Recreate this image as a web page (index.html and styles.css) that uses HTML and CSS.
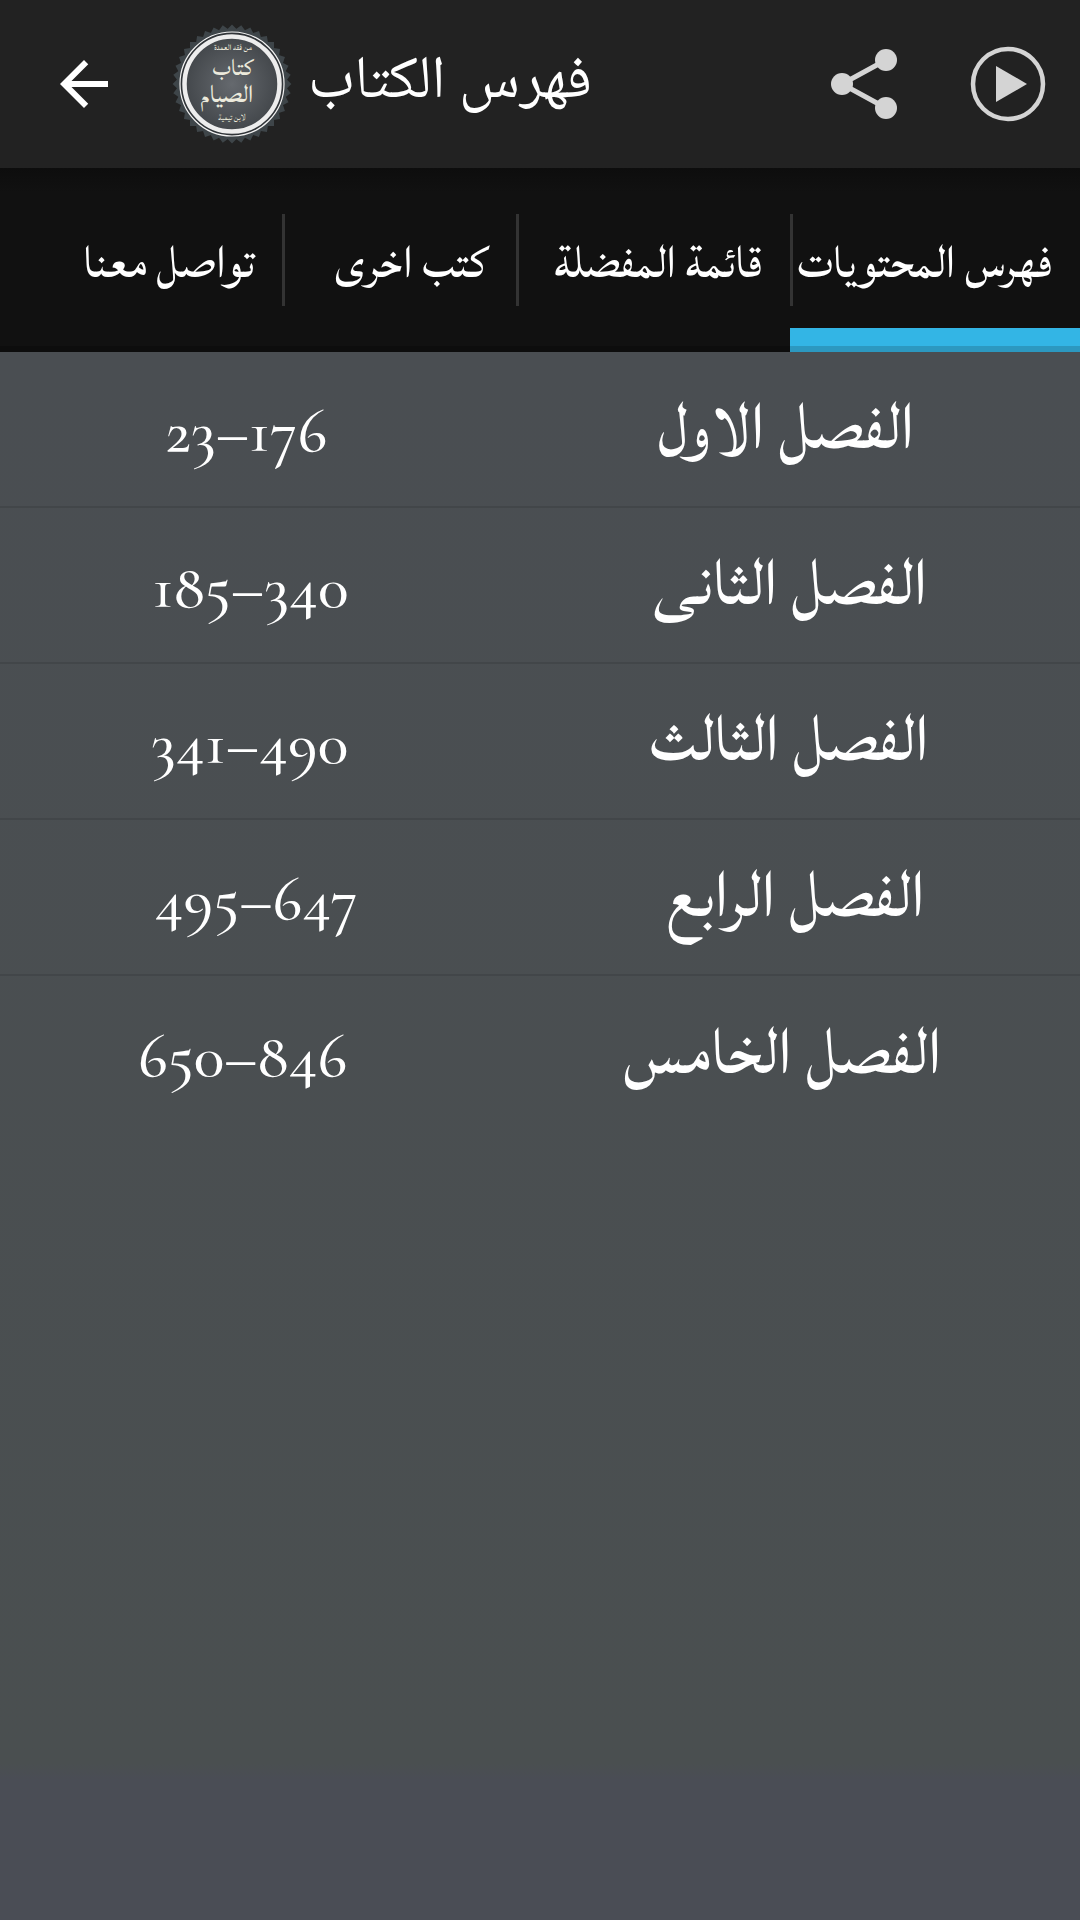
FILE: index.html
```html
<!DOCTYPE html>
<html lang="ar" dir="rtl">
<head>
<meta charset="utf-8">
<meta name="viewport" content="width=device-width, initial-scale=1">
<title>فهرس الكتاب</title>
<link rel="stylesheet" href="styles.css">
</head>
<body>
<header class="app-bar" dir="ltr">
  <button class="icon-button" type="button" aria-label="رجوع">
    <svg class="icon" width="72" height="72" viewBox="0 0 24 24" fill="#fff"><path d="M20 11H7.83l5.59-5.59L12 4l-8 8 8 8 1.41-1.41L7.83 13H20z"/></svg>
  </button>
  <svg class="logo" width="120" height="120" viewBox="-60 -60 120 120" role="img" aria-label="كتاب الصيام">
    <defs>
      <radialGradient id="seal"><stop offset="0" stop-color="#65696e"/><stop offset="1" stop-color="#43474b"/></radialGradient>
      <rect id="tooth" x="-42" y="-42" width="84" height="84"/>
    </defs>
    <g fill="#3e4549">
      <use href="#tooth"/><use href="#tooth" transform="rotate(9)"/><use href="#tooth" transform="rotate(18)"/><use href="#tooth" transform="rotate(27)"/>
      <use href="#tooth" transform="rotate(36)"/><use href="#tooth" transform="rotate(45)"/><use href="#tooth" transform="rotate(54)"/><use href="#tooth" transform="rotate(63)"/>
      <use href="#tooth" transform="rotate(72)"/><use href="#tooth" transform="rotate(81)"/>
    </g>
    <circle r="52" fill="#303438" stroke="#f2f2f2" stroke-width="1.2"/>
    <circle r="47.5" fill="url(#seal)" stroke="#ededed" stroke-width="4.5"/>
    <g class="seal-text" direction="rtl">
      <text x="1" y="-34" font-size="11">من فقه العمدة</text>
      <text x="1" y="-9" font-size="31">كتاب</text>
      <text x="-5" y="18" font-size="33">الصيام</text>
      <text x="0" y="36" font-size="11">لابن تيمية</text>
    </g>
  </svg>
  <h1 class="title"><bdi>فهرس الكتاب</bdi></h1>
  <button class="icon-button" type="button" aria-label="مشاركة">
    <svg class="icon" width="72" height="72" viewBox="-36 -36 72 72"><path d="M22 -24L-22 0L22 24" fill="none" stroke="#d4d4d4" stroke-width="5"/><g fill="#d4d4d4"><circle cx="-22" r="11"/><circle cx="22" cy="-24" r="11"/><circle cx="22" cy="24" r="11"/></g></svg>
  </button>
  <button class="icon-button" type="button" aria-label="تشغيل">
    <svg class="icon" width="76" height="76" viewBox="-38 -38 76 76"><circle r="35" fill="none" stroke="#d4d4d4" stroke-width="4.5"/><path d="M-12 -18L19 0L-12 18z" fill="#d4d4d4"/></svg>
  </button>
</header>
<nav class="tabs">
  <a class="tab tab-active" href="#index">فهرس المحتويات</a>
  <a class="tab" href="#favourites">قائمة المفضلة</a>
  <a class="tab" href="#books">كتب اخرى</a>
  <a class="tab" href="#contact">تواصل معنا</a>
</nav>
<main class="content" id="index">
  <ul class="chapters">
    <li><a class="chapter" href="#c1"><span class="name">الفصل الاول</span><span class="pages" dir="ltr">23–176</span></a></li>
    <li><a class="chapter" href="#c2"><span class="name">الفصل الثانى</span><span class="pages" dir="ltr">185–340</span></a></li>
    <li><a class="chapter" href="#c3"><span class="name">الفصل الثالث</span><span class="pages" dir="ltr">341–490</span></a></li>
    <li><a class="chapter" href="#c4"><span class="name">الفصل الرابع</span><span class="pages" dir="ltr">495–647</span></a></li>
    <li><a class="chapter" href="#c5"><span class="name">الفصل الخامس</span><span class="pages" dir="ltr">650–846</span></a></li>
  </ul>
</main>
</body>
</html>
```
FILE: styles.css
```css
* { box-sizing: border-box; }
body {
  margin: 0;
  min-height: 100vh;
  display: flex;
  flex-direction: column;
  background: #4a4d55;
  color: #fff;
  font-family: "Noto Naskh Arabic", "DejaVu Sans", sans-serif;
}
a { color: inherit; text-decoration: none; }

.app-bar {
  display: flex;
  align-items: center;
  height: 168px;
  padding: 0 34px 0 48px;
  background: #222;
}
.icon-button { padding: 0; border: 0; background: none; color: inherit; }
.icon-button + .icon-button { margin-left: 70px; }
.icon { display: block; }
.logo { margin: 0 16px 0 52px; }
.title {
  flex: 1;
  margin: 0;
  font-size: 60px;
  font-weight: 400;
  line-height: 96px;
}
.seal-text, .tab, .name {
  font-family: "Lateef", "Amiri", "Noto Naskh Arabic", "DejaVu Sans", serif;
  font-weight: 400;
}
.seal-text { fill: #eceadc; text-anchor: middle; }

.tabs {
  display: grid;
  grid-template-columns: 290fr 274fr 234fr 282fr;
  height: 184px;
  background: linear-gradient(#0d0d0d, #111 24px, #111 178px, #0d0d0d 178px);
}
.tab {
  display: flex;
  align-items: center;
  min-width: 0;
  padding: 8px 28px 0 4px;
  font-size: 60px;
  line-height: 92px;
  white-space: nowrap;
  background: linear-gradient(#333, #333) left center / 3px 92px no-repeat;
}
.tab:last-child { background: none; }
.tab-active {
  background:
    linear-gradient(#333, #333) left center / 3px 92px no-repeat,
    linear-gradient(#33b5e5 18px, #2c98c0 18px) bottom / 100% 24px no-repeat;
}

.content {
  flex: 1;
  background: linear-gradient(#4a4e52, #4a4f50 90%, #4a4d55 91%);
}
.chapters { margin: 0; padding: 0; list-style: none; }
.chapter {
  display: flex;
  align-items: center;
  justify-content: space-around;
  height: 156px;
  border-bottom: 2px solid #424649;
}
.chapters li:last-child .chapter { border-bottom: 0; }
.name { font-size: 86px; line-height: 96px; }
.pages {
  padding-top: 4px;
  font-family: "Cormorant Garamond", "EB Garamond", "Liberation Serif", serif;
  font-size: 64px;
  font-weight: 500;
  font-variant-numeric: oldstyle-nums;
  line-height: 96px;
}
```
